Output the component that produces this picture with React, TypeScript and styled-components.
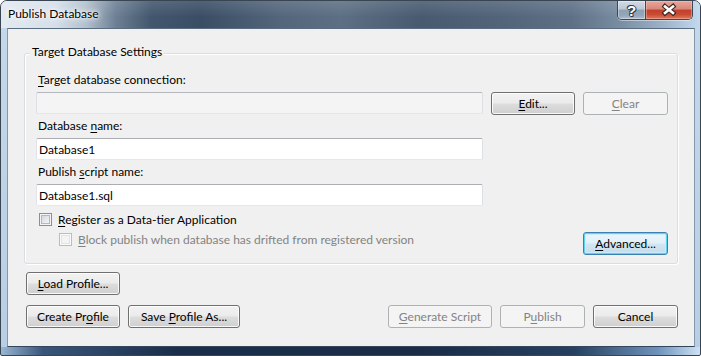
import React from 'react';
import styled, { createGlobalStyle, css } from 'styled-components';

const GlobalStyle = createGlobalStyle`
  html, body { margin: 0; padding: 0; background: #ffffff; }
  body { font-family: Lato, "Noto Sans", sans-serif; font-size: 12px; color: #000; }
  * { box-sizing: border-box; }
`;

const Window = styled.div`
  width: 701px;
  height: 356px;
  display: flex;
  flex-direction: column;
  border: 1px solid #3a4552;
  border-radius: 7px 7px 2px 2px;
  overflow: hidden;
  background:
    linear-gradient(90deg, #9ab6d3 0%, #3a557a 6%, #1b2e49 25%, #1a2c46 60%, #27405f 82%, #6e93bb 94%, #cfe2f4 100%) bottom / 100% 8px no-repeat,
    linear-gradient(180deg, #c6d8ea 0%, #b8cee5 100%);
`;

const TitleBar = styled.div`
  height: 27px;
  flex: none;
  display: flex;
  align-items: flex-start;
  padding: 0 7px 0 7px;
  background:
    linear-gradient(180deg, rgba(255,255,255,0.12) 0%, rgba(255,255,255,0) 60%),
    linear-gradient(90deg, #e3eaf1 0px, #d5dfe9 55px, #b2c0ce 85px, #6c7f94 115px, #42566d 150px, #394d64 200px, #53667c 280px, #5d6f84 340px, #475a70 420px, #51647a 500px, #5d7086 570px, #7a8ea3 620px, #9fb5cb 665px, #c4daf0 700px);
`;

const Title = styled.div`
  flex: 1;
  margin-top: 5px;
  line-height: 15px;
  font-size: 12px;
  color: #000;
  text-shadow: 0 0 6px #fff, 0 0 10px #fff, 0 0 3px #fff;
`;

const CaptionGroup = styled.div`
  display: flex;
  height: 19px;
  border: 1px solid #3c4856;
  border-top: none;
  border-radius: 0 0 5px 5px;
  overflow: hidden;
  box-shadow: 0 1px 0 rgba(255, 255, 255, 0.45);
`;

const HelpButton = styled.div`
  width: 27px;
  height: 18px;
  display: flex;
  align-items: center;
  justify-content: center;
  padding-top: 1px;
  background: linear-gradient(180deg, #d3dce6 0%, #bac7d4 45%, #8fa0b2 50%, #94a7ba 80%, #adc0d2 100%);
  box-shadow: inset 0 0 0 1px rgba(255, 255, 255, 0.35);
  font-family: "Liberation Sans", Arial, sans-serif;
  font-weight: 700;
  font-size: 15px;
  line-height: 15px;
  color: #fff;
  text-shadow: 1px 0 #34414f, -1px 0 #34414f, 0 1px #34414f, 0 -1px #34414f, 1px 1px #34414f, -1px -1px #34414f;
`;

const CloseButton = styled.div`
  width: 47px;
  height: 18px;
  border-left: 1px solid #3c4856;
  background: linear-gradient(180deg, #e6a799 0%, #d8887a 45%, #c3402b 50%, #c84b33 75%, #dd7b5f 100%);
  box-shadow: inset 0 0 0 1px rgba(255, 220, 210, 0.35);
  display: flex;
`;

const Frame = styled.div`
  flex: 1;
  display: flex;
  flex-direction: column;
  padding: 0 5px 8px 6px;
`;

const Client = styled.div`
  flex: 1;
  display: flex;
  flex-direction: column;
  background: #f0f0f0;
  border: 1px solid;
  border-color: #5a6c80 #8498ad #34465b #8498ad;
  padding: 24px 16px 0;
`;

const GroupBox = styled.section`
  position: relative;
  height: 211px;
  flex: none;
  display: flex;
  flex-direction: column;
  border: 1px solid #d5dfe5;
  border-radius: 3px;
  box-shadow: inset 1px 1px 0 #ffffff, 1px 1px 0 #ffffff;
  padding: 18px 9px 0 11px;
`;

const Legend = styled.span`
  position: absolute;
  top: -10px;
  left: 5px;
  padding: 0 2px;
  line-height: 15px;
  background: #f0f0f0;
`;

const FieldLabel = styled.div<{ $top: number }>`
  line-height: 15px;
  height: 15px;
  padding-left: 2px;
  margin-top: ${(p) => p.$top}px;
  margin-bottom: 5px;
`;

const U = styled.u`
  text-decoration: underline;
  text-decoration-thickness: 1px;
  text-underline-offset: 2px;
`;

const ConnectionRow = styled.div`
  display: grid;
  grid-template-columns: 447px 84px 85px;
  column-gap: 8px;
  align-items: start;
  height: 23px;
`;

const TextBox = styled.input`
  width: 447px;
  height: 22px;
  margin: 0;
  padding: 0 2px;
  font: inherit;
  color: #000;
  background: #ffffff;
  border: 1px solid;
  border-color: #abadb3 #dbdfe6 #e3e9ef #e2e3ea;
  border-radius: 2px;
  outline: none;
  &:disabled {
    background: #f4f4f4;
    border-color: #b5b8bd #dcdfe3 #e3e5e8 #dcdfe3;
  }
`;

const Button = styled.button<{ $w: number; $default?: boolean }>`
  width: ${(p) => p.$w}px;
  height: 23px;
  margin: 0;
  padding: 0;
  flex: none;
  font: inherit;
  line-height: 15px;
  color: #000;
  border: 1px solid #707070;
  border-radius: 3px;
  background: linear-gradient(180deg, #f2f2f2 0%, #ebebeb 48%, #dddddd 52%, #cfcfcf 100%);
  box-shadow: inset 0 0 0 1px rgba(255, 255, 255, 0.85);
  ${(p) =>
    p.$default &&
    css`
      border-color: #3c7fb1;
      background: linear-gradient(180deg, #eaf6fd 0%, #e1f0f8 48%, #d2e6f1 52%, #c5dcea 100%);
      box-shadow: inset 0 0 0 1px #5fd2f4, inset 0 0 0 2px rgba(200, 236, 250, 0.8);
    `}
  &:disabled {
    color: #838383;
    border-color: #adb2b5;
    background: #f4f4f4;
    box-shadow: none;
  }
`;

const CheckRow = styled.label<{ $indent: number; $top: number; $disabled?: boolean }>`
  display: flex;
  align-items: center;
  gap: 6px;
  height: 15px;
  line-height: 15px;
  margin-left: ${(p) => p.$indent}px;
  margin-top: ${(p) => p.$top}px;
  color: ${(p) => (p.$disabled ? '#838383' : '#000')};
`;

const Check = styled.input`
  appearance: none;
  -webkit-appearance: none;
  width: 13px;
  height: 13px;
  margin: 0;
  flex: none;
  border: 1px solid #8e8f8f;
  background: linear-gradient(135deg, #cbcfd5 0%, #e9ebee 60%, #f7f7f7 100%);
  box-shadow: inset 0 0 0 1px #f4f4f4, inset 0 0 0 2px #b4b9bf;
  &:disabled {
    border-color: #bcbcbc;
    background: #f4f4f4;
    box-shadow: inset 0 0 0 1px #fbfbfb, inset 0 0 0 2px #e0e2e4;
  }
`;

const OptionRow = styled.div`
  display: flex;
  justify-content: space-between;
  align-items: flex-start;
  height: 23px;
  margin-top: 5px;
`;

const ButtonRow = styled.div<{ $top: number }>`
  display: flex;
  gap: 8px;
  margin-top: ${(p) => p.$top}px;
  padding-left: 2px;
`;

const Spacer = styled.div`
  flex: 1;
`;

export default function App() {
  return (
    <>
      <GlobalStyle />
      <Window>
        <TitleBar>
          <Title>Publish Database</Title>
          <CaptionGroup>
            <HelpButton>?</HelpButton>
            <CloseButton>
              <svg width="46" height="18" viewBox="0 0 46 18">
                <path d="M19 5.5 L27 12 M27 5.5 L19 12" stroke="#3b2626" strokeWidth="4.8" strokeLinecap="square" fill="none" />
                <path d="M19 5.5 L27 12 M27 5.5 L19 12" stroke="#ffffff" strokeWidth="2.6" strokeLinecap="square" fill="none" />
              </svg>
            </CloseButton>
          </CaptionGroup>
        </TitleBar>
        <Frame>
          <Client>
            <GroupBox>
              <Legend>Target Database Settings</Legend>
              <FieldLabel $top={0}>
                <U>T</U>arget database connection:
              </FieldLabel>
              <ConnectionRow>
                <TextBox disabled value="" readOnly />
                <Button $w={84}>
                  <U>E</U>dit...
                </Button>
                <Button $w={85} disabled>
                  <U>C</U>lear
                </Button>
              </ConnectionRow>
              <FieldLabel $top={3}>
                Database <U>n</U>ame:
              </FieldLabel>
              <TextBox value="Database1" readOnly />
              <FieldLabel $top={4}>
                Publish <U>s</U>cript name:
              </FieldLabel>
              <TextBox value="Database1.sql" readOnly />
              <CheckRow $indent={3} $top={6}>
                <Check type="checkbox" />
                <span>
                  <U>R</U>egister as a Data-tier Application
                </span>
              </CheckRow>
              <OptionRow>
                <CheckRow $indent={23} $top={0} $disabled>
                  <Check type="checkbox" disabled />
                  <span>
                    <U>B</U>lock publish when database has drifted from registered version
                  </span>
                </CheckRow>
                <Button $w={85} $default>
                  <U>A</U>dvanced...
                </Button>
              </OptionRow>
            </GroupBox>
            <ButtonRow $top={8}>
              <Button $w={94}>
                <U>L</U>oad Profile...
              </Button>
            </ButtonRow>
            <ButtonRow $top={10}>
              <Button $w={94}>
                Create Pr<U>o</U>file
              </Button>
              <Button $w={112}>
                Save <U>P</U>rofile As...
              </Button>
              <Spacer />
              <Button $w={104} disabled>
                <U>G</U>enerate Script
              </Button>
              <Button $w={85} disabled>
                P<U>u</U>blish
              </Button>
              <Button $w={85}>Cancel</Button>
            </ButtonRow>
          </Client>
        </Frame>
      </Window>
    </>
  );
}
